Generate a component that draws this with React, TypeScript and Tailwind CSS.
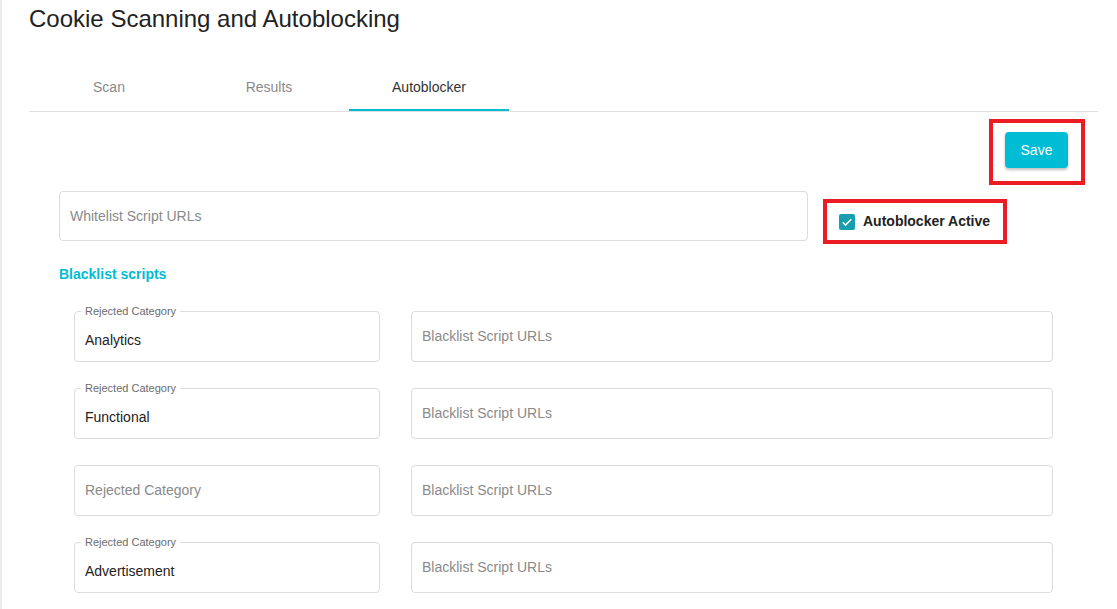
import { useState } from "react";

const tabs = ["Scan", "Results", "Autoblocker"];

const rows = [
  { category: "Analytics" },
  { category: "Functional" },
  { category: "" },
  { category: "Advertisement" },
];

const CategoryField = ({ value }: { value: string }) => {
  if (!value) {
    return (
      <div className="w-[306px] h-[51px] border border-[#dcdcdc] rounded-[4px] flex items-center pl-[10px] text-[14px] text-[#8a8a8a]">
        Rejected Category
      </div>
    );
  }
  return (
    <div className="relative w-[306px] h-[51px] border border-[#dcdcdc] rounded-[4px] flex items-center pl-[10px] pt-[8px] text-[14px] text-[#222]">
      <span className="absolute left-[6px] -top-[7px] px-[4px] bg-white text-[11px] leading-[13px] text-[#6b6b6b]">
        Rejected Category
      </span>
      {value}
    </div>
  );
};

const App = () => {
  const [active, setActive] = useState(2);
  const [autoblock, setAutoblock] = useState(true);

  return (
    <div className="min-h-screen bg-white border-l-2 border-[#ebebeb] font-['Liberation_Sans',Arial,sans-serif]">
      <div className="pl-[27px] pr-[19px]">
        <h1 className="pt-[5px] text-[24px] leading-[28px] text-[#222]">
          Cookie Scanning and Autoblocking
        </h1>

        {/* tabs */}
        <div className="mt-[30px] flex border-b border-[#e0e0e0]">
          {tabs.map((t, i) => (
            <button
              key={t}
              onClick={() => setActive(i)}
              className={`w-[160px] h-[48px] flex items-center justify-center pt-[2px] text-[14px] border-b-2 ${
                i === active
                  ? "border-[#00bcd4] text-[#333]"
                  : "border-transparent text-[#8a8a8a]"
              }`}
            >
              {t}
            </button>
          ))}
        </div>

        <div className="px-[30px]">
          <div className="mt-[7px] flex justify-end">
            <div className="-mr-[17px] border-4 border-[#ed1c24] pl-[12px] pr-[13px] pt-[9px] pb-[13px]">
              <button className="w-[63px] h-[36px] rounded-[4px] bg-[#00bcd4] text-white text-[14px] shadow-[0_2px_3px_rgba(0,0,0,0.25)]">
                Save
              </button>
            </div>
          </div>

          <div className="mt-[6px] flex items-start">
            <div className="w-[749px] h-[50px] border border-[#dcdcdc] rounded-[4px] flex items-center pl-[10px] text-[14px] text-[#8a8a8a]">
              Whitelist Script URLs
            </div>
            <div className="ml-[15px] mt-[8px] w-[184px] h-[45px] border-4 border-[#ed1c24] flex items-center pl-[12px]">
              <button
                onClick={() => setAutoblock(!autoblock)}
                className={`w-[16px] h-[16px] rounded-[2px] flex items-center justify-center ${
                  autoblock ? "bg-[#179fb0]" : "border-2 border-[#777]"
                }`}
              >
                {autoblock && (
                  <svg viewBox="0 0 16 16" className="w-[16px] h-[16px]">
                    <path
                      d="M3.8 8.3l2.7 2.7 5.7-5.7"
                      fill="none"
                      stroke="white"
                      strokeWidth="1.6"
                    />
                  </svg>
                )}
              </button>
              <span className="ml-[8px] text-[14px] font-bold text-[#222]">
                Autoblocker Active
              </span>
            </div>
          </div>

          <div className="mt-[20px] text-[14px] leading-[20px] font-bold text-[#00bcd4]">
            Blacklist scripts
          </div>

          <div className="mt-[27px] px-[15px] flex flex-col gap-[26px] pb-[20px]">
            {rows.map((r, i) => (
              <div key={i} className="flex gap-[31px]">
                <CategoryField value={r.category} />
                <div className="flex-1 h-[51px] border border-[#dcdcdc] rounded-[4px] flex items-center pl-[10px] text-[14px] text-[#8a8a8a]">
                  Blacklist Script URLs
                </div>
              </div>
            ))}
          </div>
        </div>
      </div>
    </div>
  );
};

export default App;
